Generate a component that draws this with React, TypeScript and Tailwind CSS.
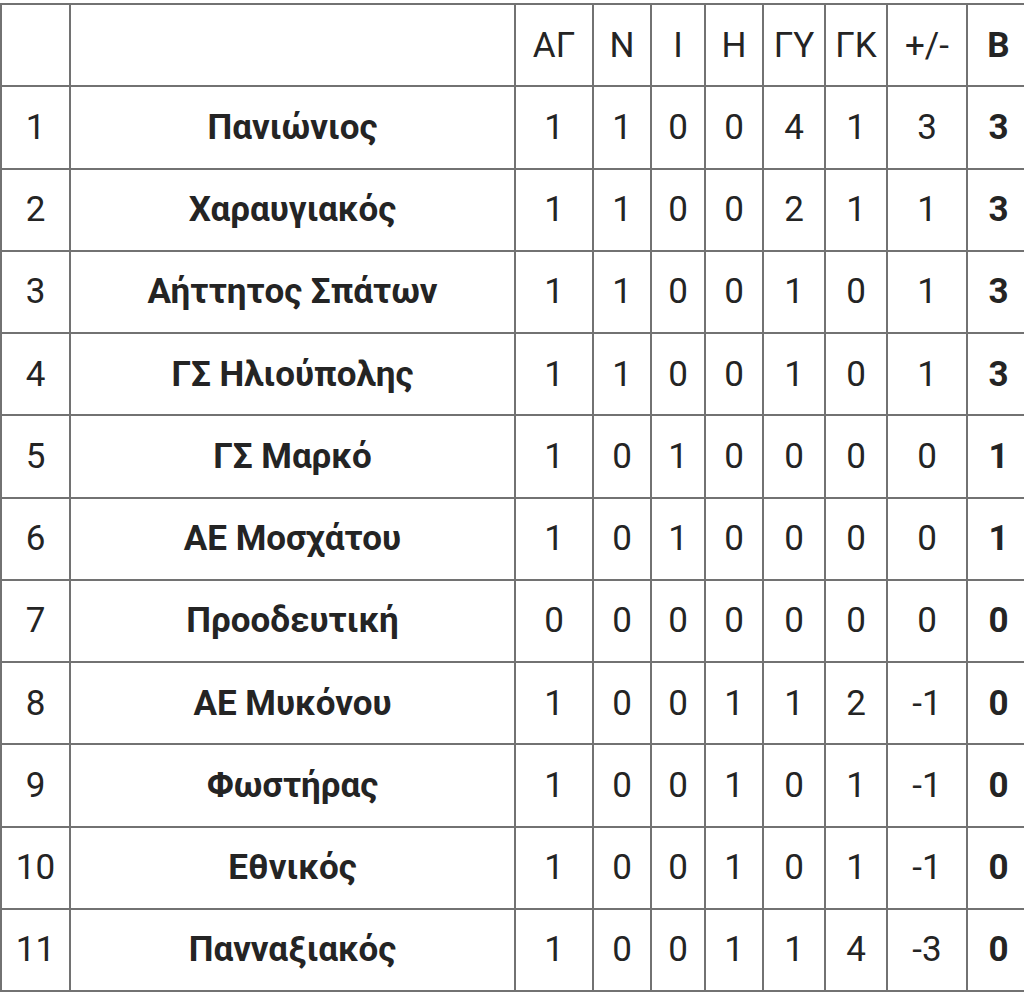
import React from 'react';

interface Row {
  pos: number;
  team: string;
  played: number;
  won: number;
  drawn: number;
  lost: number;
  gf: number;
  ga: number;
  diff: number;
  pts: number;
}

const rows: Row[] = [
  { pos: 1, team: 'Πανιώνιος', played: 1, won: 1, drawn: 0, lost: 0, gf: 4, ga: 1, diff: 3, pts: 3 },
  { pos: 2, team: 'Χαραυγιακός', played: 1, won: 1, drawn: 0, lost: 0, gf: 2, ga: 1, diff: 1, pts: 3 },
  { pos: 3, team: 'Αήττητος Σπάτων', played: 1, won: 1, drawn: 0, lost: 0, gf: 1, ga: 0, diff: 1, pts: 3 },
  { pos: 4, team: 'ΓΣ Ηλιούπολης', played: 1, won: 1, drawn: 0, lost: 0, gf: 1, ga: 0, diff: 1, pts: 3 },
  { pos: 5, team: 'ΓΣ Μαρκό', played: 1, won: 0, drawn: 1, lost: 0, gf: 0, ga: 0, diff: 0, pts: 1 },
  { pos: 6, team: 'ΑΕ Μοσχάτου', played: 1, won: 0, drawn: 1, lost: 0, gf: 0, ga: 0, diff: 0, pts: 1 },
  { pos: 7, team: 'Προοδευτική', played: 0, won: 0, drawn: 0, lost: 0, gf: 0, ga: 0, diff: 0, pts: 0 },
  { pos: 8, team: 'ΑΕ Μυκόνου', played: 1, won: 0, drawn: 0, lost: 1, gf: 1, ga: 2, diff: -1, pts: 0 },
  { pos: 9, team: 'Φωστήρας', played: 1, won: 0, drawn: 0, lost: 1, gf: 0, ga: 1, diff: -1, pts: 0 },
  { pos: 10, team: 'Εθνικός', played: 1, won: 0, drawn: 0, lost: 1, gf: 0, ga: 1, diff: -1, pts: 0 },
  { pos: 11, team: 'Πανναξιακός', played: 1, won: 0, drawn: 0, lost: 1, gf: 1, ga: 4, diff: -3, pts: 0 },
];

const cell = 'border-2 border-[#727272] text-center align-middle p-0';

const App: React.FC = () => {
  return (
    <div className="w-[1024px] h-[995px] overflow-hidden bg-white pt-[3px]">
      <table
        className="border-collapse table-fixed w-[1031px] text-[35px] leading-none text-[#242424] font-['Roboto',sans-serif]"
      >
        <colgroup>
          <col className="w-[69px]" />
          <col className="w-[445px]" />
          <col className="w-[78px]" />
          <col className="w-[58px]" />
          <col className="w-[54px]" />
          <col className="w-[58px]" />
          <col className="w-[62px]" />
          <col className="w-[62px]" />
          <col className="w-[80px]" />
          <col className="w-[63px]" />
        </colgroup>
        <thead>
          <tr className="h-[82.25px]">
            <th className={cell}></th>
            <th className={cell}></th>
            <th className={`${cell} font-normal`}>ΑΓ</th>
            <th className={`${cell} font-normal`}>Ν</th>
            <th className={`${cell} font-normal`}>Ι</th>
            <th className={`${cell} font-normal`}>Η</th>
            <th className={`${cell} font-normal`}>ΓΥ</th>
            <th className={`${cell} font-normal`}>ΓΚ</th>
            <th className={`${cell} font-normal`}>+/-</th>
            <th className={`${cell} font-bold`}>Β</th>
          </tr>
        </thead>
        <tbody>
          {rows.map(r => (
            <tr key={r.pos} className="h-[82.25px]">
              <td className={cell}>{r.pos}</td>
              <td className={`${cell} font-bold`}>{r.team}</td>
              <td className={cell}>{r.played}</td>
              <td className={cell}>{r.won}</td>
              <td className={cell}>{r.drawn}</td>
              <td className={cell}>{r.lost}</td>
              <td className={cell}>{r.gf}</td>
              <td className={cell}>{r.ga}</td>
              <td className={cell}>{r.diff}</td>
              <td className={`${cell} font-bold`}>{r.pts}</td>
            </tr>
          ))}
        </tbody>
      </table>
    </div>
  );
};

export default App;
